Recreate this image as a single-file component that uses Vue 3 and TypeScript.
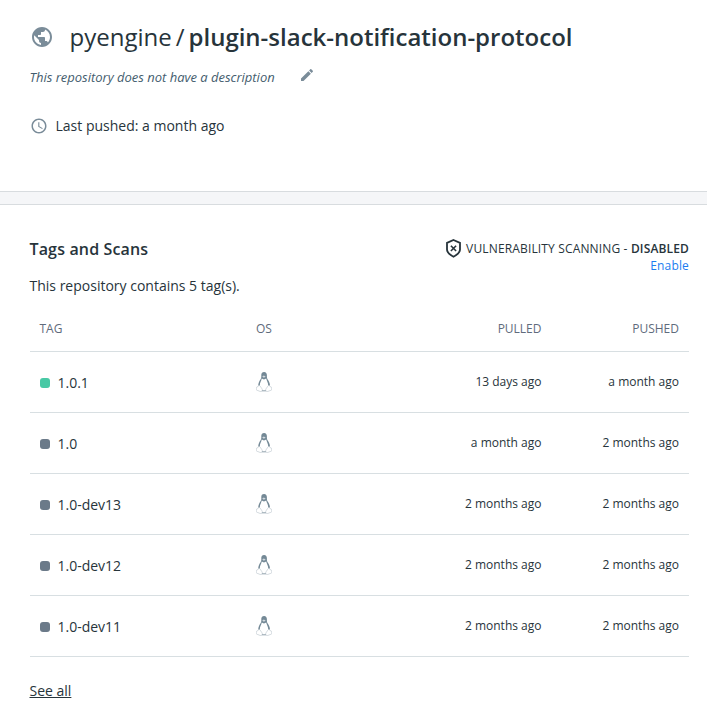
<script setup lang="ts">
interface Tag {
  name: string
  active: boolean
  pulled: string
  pushed: string
}

const tags: Tag[] = [
  { name: '1.0.1', active: true, pulled: '13 days ago', pushed: 'a month ago' },
  { name: '1.0', active: false, pulled: 'a month ago', pushed: '2 months ago' },
  { name: '1.0-dev13', active: false, pulled: '2 months ago', pushed: '2 months ago' },
  { name: '1.0-dev12', active: false, pulled: '2 months ago', pushed: '2 months ago' },
  { name: '1.0-dev11', active: false, pulled: '2 months ago', pushed: '2 months ago' },
]
</script>

<template>
  <div class="page">
    <header class="repo">
      <div class="title-row">
        <svg class="icon globe" viewBox="0 0 24 24">
          <path d="M12 2C6.48 2 2 6.48 2 12s4.48 10 10 10 10-4.48 10-10S17.52 2 12 2zm-1 17.93c-3.95-.49-7-3.85-7-7.93 0-.62.08-1.21.21-1.79L9 15v1c0 1.1.9 2 2 2v1.93zm6.9-2.54c-.26-.81-1-1.39-1.9-1.39h-1v-3c0-.55-.45-1-1-1H8v-2h2c.55 0 1-.45 1-1V7h2c1.1 0 2-.9 2-2v-.41c2.93 1.19 5 4.06 5 7.41 0 2.08-.8 3.97-2.1 5.39z" />
        </svg>
        <h1 class="title">
          <span class="owner">pyengine</span><span class="slash">/</span><span class="name">plugin-slack-notification-protocol</span>
        </h1>
      </div>
      <div class="description">
        <em>This repository does not have a description</em>
        <svg class="icon pencil" viewBox="0 0 24 24">
          <path d="M3 17.25V21h3.75L17.81 9.94l-3.75-3.75L3 17.25zM20.71 7.04c.39-.39.39-1.02 0-1.41l-2.34-2.34c-.39-.39-1.02-.39-1.41 0l-1.83 1.83 3.75 3.75 1.83-1.83z" />
        </svg>
      </div>
      <div class="pushed">
        <svg class="icon clock" viewBox="0 0 24 24">
          <path d="M11.99 2C6.47 2 2 6.48 2 12s4.47 10 9.99 10C17.52 22 22 17.52 22 12S17.52 2 11.99 2zM12 20c-4.42 0-8-3.58-8-8s3.58-8 8-8 8 3.58 8 8-3.58 8-8 8zm.5-13H11v6l5.25 3.15.75-1.23-4.5-2.67z" />
        </svg>
        <span>Last pushed: a month ago</span>
      </div>
    </header>
    <div class="divider"></div>
    <main class="tags">
      <div class="tags-head">
        <div>
          <h2>Tags and Scans</h2>
          <p class="count">This repository contains 5 tag(s).</p>
        </div>
        <div class="scan">
          <div class="scan-status">
            <svg class="shield" viewBox="0 0 17 20">
              <path d="M8.500 2 15 4.900v6.600c0 2.800-2.300 5-6.500 7.200C4.300 16.500 2 14.300 2 11.500V4.900z" />
              <path class="cross" d="m5.900 7.800 5.200 5.200m0-5.200-5.200 5.200" />
            </svg>
            <span>VULNERABILITY SCANNING - <strong>DISABLED</strong></span>
          </div>
          <a class="enable">Enable</a>
        </div>
      </div>
      <div class="table">
        <div class="row head">
          <span>TAG</span>
          <span>OS</span>
          <span class="time">PULLED</span>
          <span class="time">PUSHED</span>
        </div>
        <div v-for="tag in tags" :key="tag.name" class="row body">
          <span class="tag"><i class="dot" :class="{ active: tag.active }"></i>{{ tag.name }}</span>
          <svg class="tux" viewBox="0 0 16 20">
            <path class="coat" d="M8.100.1C6.100.1 5.200 1.400 5.300 3.300c.1 2 .1 2.700-.9 4.200C3.200 9.300 2.400 11 2.200 13.500l2 3.700 1.800 2h4l1.800-2 2.200-3.700c-.1-2.500-1.100-4.200-2.300-6-.9-1.400-.8-2.400-.8-4.200C10.900 1.400 10 .1 8.100.1z" />
            <path class="belly" d="M5.700 6.600C5.500 8.900 3.700 10.600 3.800 13.600c.1 3 1.900 5 4.200 5s4.100-2 4.200-5c.1-3-1.700-4.900-2-7L8 7.400z" />
            <path class="beak" d="m6.200 4.500 1.600-.9 1.900.9-1.800 1.200z" />
            <path class="foot" d="M2.900 13.300c-.6.100-.8.900-1.100 1.400-.5.400-1.300.2-1.500.8-.1.600.2 1.200 0 2.100.1.900 1.600.8 2.700 1.400 1 .5 2.300.8 3 0 .9-1.100-.1-2.300-.9-3.500-.7-1-1.400-2.300-2.200-2.200z" />
            <path class="foot" d="M13.100 13.300c.6.100.8.900 1.100 1.400.5.400 1.300.2 1.500.8.100.6-.2 1.200 0 2.100-.1.900-1.600.8-2.700 1.400-1 .5-2.300.8-3 0-.9-1.100.1-2.300.9-3.500.7-1 1.400-2.300 2.200-2.200z" />
          </svg>
          <span class="time">{{ tag.pulled }}</span>
          <span class="time">{{ tag.pushed }}</span>
        </div>
      </div>
      <a class="see-all">See all</a>
    </main>
  </div>
</template>

<style>
body {
  background: #fff;
}
</style>

<style scoped>
.page {
  box-sizing: border-box;
  height: 713px;
  overflow: hidden;
  font-family: 'Open Sans', sans-serif;
  font-size: 14px;
  line-height: 20px;
  color: #27343b;
}
h1,
h2,
p {
  margin: 0;
}
svg {
  display: block;
  flex: none;
}
.icon {
  fill: #7a8c99;
}
.repo {
  box-sizing: border-box;
  height: 191px;
  padding: 20px 30px 0 29.5px;
}
.title-row {
  display: flex;
  align-items: center;
  height: 34px;
}
.globe {
  width: 24px;
  height: 24px;
}
.title {
  display: flex;
  margin-left: 16px;
  font-size: 24px;
  line-height: 34px;
  font-weight: 400;
  white-space: nowrap;
}
.slash {
  margin: 0 4px 0 4px;
}
.name {
  font-weight: 600;
}
.description {
  display: flex;
  align-items: center;
  margin-top: 13px;
  font-size: 13px;
  color: #445d6e;
}
.description em {
  letter-spacing: -0.01px;
}
.pencil {
  width: 16px;
  height: 16px;
  margin: -4px 0 0 24px;
}
.pushed {
  display: flex;
  align-items: center;
  gap: 8px;
  margin-top: 29px;
}
.clock {
  width: 18px;
  height: 18px;
}
.divider {
  height: 12px;
  background: #f5f6f8;
  border: solid #d8dcdf;
  border-width: 1px 0;
}
.tags {
  padding: 34px 18px 0 29.5px;
}
.tags-head {
  display: flex;
  justify-content: space-between;
  height: 67px;
}
h2 {
  font-size: 16px;
  line-height: 20px;
  font-weight: 600;
  letter-spacing: 0.15px;
}
.count {
  margin-top: 17px;
}
.scan {
  font-size: 12px;
  line-height: 17px;
  letter-spacing: 0.15px;
  text-align: right;
}
.scan-status {
  display: flex;
  align-items: center;
  gap: 4px;
  height: 18px;
}
.scan strong {
  font-weight: 600;
}
.shield {
  width: 17px;
  height: 20px;
  fill: none;
  stroke: #27343b;
  stroke-width: 1.8;
}
.cross {
  stroke-width: 1.6;
}
.enable {
  color: #1b7df0;
}
.row {
  display: grid;
  grid-template-columns: 216.5px 130px 1fr 137.5px;
  align-items: center;
  box-sizing: border-box;
  padding: 0 10px;
  border-bottom: 1px solid #d8dfe2;
}
.head {
  height: 46px;
  font-size: 12px;
  color: #5f6b7c;
}
.body {
  height: 61px;
}
.time {
  font-size: 12px;
  text-align: right;
}
.body .time {
  padding-bottom: 1px;
}
.tag {
  display: flex;
  align-items: center;
  gap: 8px;
  padding-top: 2px;
}
.dot {
  width: 10px;
  height: 10px;
  border-radius: 3px;
  background: #6b7a89;
}
.dot.active {
  background: #48c9a5;
}
.tux {
  width: 16px;
  height: 20px;
}
.coat {
  fill: #748996;
}
.belly {
  fill: #fff;
}
.beak {
  fill: #d3dadf;
}
.foot {
  fill: #fff;
  stroke: #b4c0c8;
  stroke-width: 0.6;
}
.see-all {
  display: inline-block;
  margin-top: 24px;
  text-decoration: underline;
}
</style>
